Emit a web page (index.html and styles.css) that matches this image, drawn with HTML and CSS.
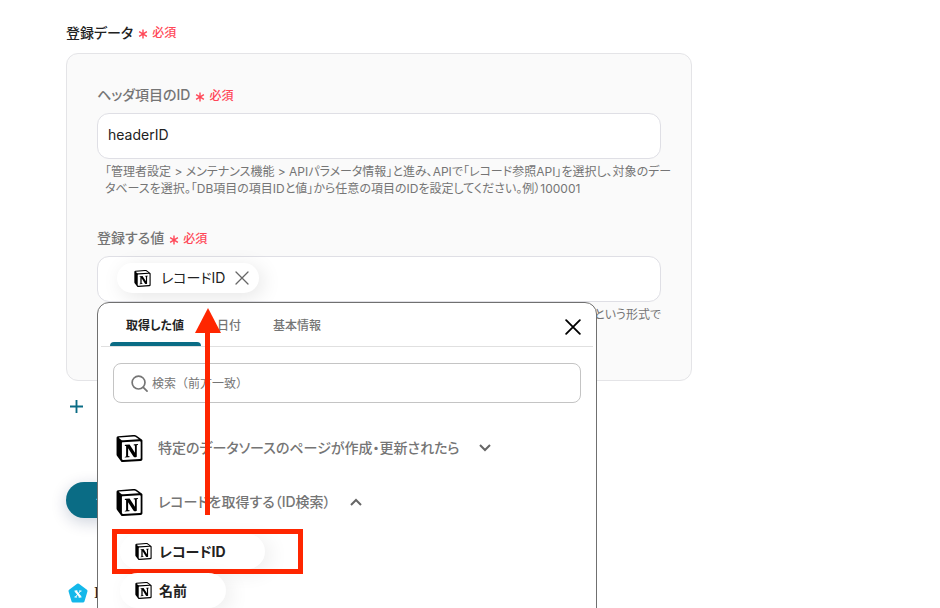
FILE: index.html
```html
<!DOCTYPE html>
<html lang="ja">
<head>
    <meta charset="UTF-8">
    <meta name="viewport" content="width=device-width, initial-scale=1.0">
    <title>登録データ</title>
    <link rel="stylesheet" href="styles.css">
</head>
<body>
    <!-- Shared icons -->
    <svg class="sprite" aria-hidden="true">
        <symbol id="notion" viewBox="0 0 24 24">
            <path fill="#fff" d="M2 1L17 0l6 5v17L5 23.500 1 18z"/>
            <path d="M4.459 4.208c.746.606 1.026.56 2.428.466l13.215-.793c.28 0 .047-.28-.046-.326L17.86 1.968c-.42-.326-.981-.7-2.055-.607L3.01 2.295c-.466.046-.56.28-.374.466zm.793 3.08v13.904c0 .747.373 1.027 1.214.98l14.523-.84c.841-.046.935-.56.935-1.167V6.354c0-.606-.233-.933-.748-.887l-15.177.887c-.56.047-.747.327-.747.933zm14.337.745c.093.42 0 .84-.42.888l-.7.14v10.264c-.608.327-1.168.514-1.635.514-.748 0-.935-.234-1.495-.933l-4.577-7.186v6.952L12.21 19s0 .84-1.168.84l-3.222.186c-.093-.186 0-.653.327-.746l.84-.233V9.854L7.822 9.76c-.094-.42.14-1.026.793-1.073l3.456-.233 4.764 7.279v-6.44l-1.215-.139c-.093-.514.28-.887.747-.933zM1.936 1.035l13.31-.98c1.634-.14 2.055-.047 3.082.7l4.249 2.986c.7.513.934.653.934 1.213v16.378c0 1.026-.373 1.634-1.68 1.726l-15.458.934c-.98.047-1.448-.093-1.962-.747l-3.129-4.06c-.56-.747-.793-1.306-.793-1.96V2.667c0-.839.374-1.54 1.447-1.632z"/>
        </symbol>
        <symbol id="asterisk" viewBox="0 0 10 10">
            <path d="M5 .5v9M1.100 2.700l7.800 4.600M8.900 2.700L1.100 7.300" stroke="#ff4757" stroke-width="1.400"/>
        </symbol>
        <symbol id="close" viewBox="0 0 14 14">
            <path d="M1 1l12 12M13 1L1 13" fill="none" stroke="currentColor" stroke-linecap="round"/>
        </symbol>
    </svg>

    <main class="page">
        <h1 class="title">登録データ <span class="required"><svg><use href="#asterisk"/></svg>必須</span></h1>

        <section class="card">
            <div class="field">
                <label class="label" for="headerId">ヘッダ項目のID <span class="required"><svg><use href="#asterisk"/></svg>必須</span></label>
                <input class="box" type="text" id="headerId" value="headerID">
                <p class="help">「管理者設定 &gt; メンテナンス機能 &gt; APIパラメータ情報」と進み、APIで「レコード参照API」を選択し、対象のデータベースを選択。「DB項目の項目IDと値」から任意の項目のIDを設定してください。例）100001</p>
            </div>

            <div class="field">
                <h2 class="label">登録する値 <span class="required"><svg><use href="#asterisk"/></svg>必須</span></h2>
                <div class="box token-box">
                    <span class="token">
                        <svg class="logo-small"><use href="#notion"/></svg>
                        レコードID
                        <button class="token-remove" type="button" aria-label="削除"><svg stroke-width="1.300"><use href="#close"/></svg></button>
                    </span>
                </div>
                <p class="help help-end">という形式で</p>

                <!-- Value picker -->
                <div class="picker">
                    <div class="tabs">
                        <button class="tab active" type="button">取得した値</button>
                        <button class="tab" type="button">日付</button>
                        <button class="tab" type="button">基本情報</button>
                        <button class="picker-close" type="button" aria-label="閉じる"><svg stroke-width="1.600"><use href="#close"/></svg></button>
                    </div>

                    <div class="picker-body">
                        <div class="search">
                            <svg viewBox="0 0 18 18" fill="none" stroke="#757575" stroke-width="1.800" stroke-linecap="round"><circle cx="8" cy="8" r="6.800"/><path d="M13 13l4 4"/></svg>
                            <input type="search" placeholder="検索（前方一致）" aria-label="検索">
                        </div>

                        <button class="source" type="button">
                            <svg class="logo"><use href="#notion"/></svg>
                            特定のデータソースのページが作成・更新されたら
                            <svg class="chevron" viewBox="0 0 12 8"><path d="M1 1l5 5 5-5"/></svg>
                        </button>
                        <button class="source" type="button">
                            <svg class="logo"><use href="#notion"/></svg>
                            レコードを取得する（ID検索）
                            <svg class="chevron" viewBox="0 0 12 8"><path d="M1 7l5-5 5 5"/></svg>
                        </button>

                        <div class="values">
                            <div class="value-row">
                                <button class="value" type="button"><svg class="logo-small"><use href="#notion"/></svg>レコードID</button>
                                <span class="highlight"></span>
                            </div>
                            <div class="value-row">
                                <button class="value" type="button"><svg class="logo-small"><use href="#notion"/></svg>名前</button>
                            </div>
                        </div>
                    </div>

                    <svg class="arrow" viewBox="0 0 26 207" fill="#ff2600"><path d="M13 0l13 25H0z"/><path d="M10 24h5v183h-5z"/></svg>
                </div>
            </div>
        </section>

        <button class="add" type="button">
            <svg viewBox="0 0 14 14" stroke="#0a6c85" stroke-width="2"><path d="M7 0v14M0 7h14"/></svg>
            追加
        </button>
        <button class="test" type="button">テスト</button>

        <div class="next">
            <svg viewBox="0 0 20 20">
                <path d="M10 2l8 6-3 10H5L2 8z" fill="#14b8ea" stroke="#14b8ea" stroke-width="3" stroke-linejoin="round"/>
                <path d="M7.500 8l5 6" stroke="#fff" stroke-width="2"/>
                <path d="M12.500 8l-5 6M6.500 8h3M11 8h2.500M6.500 14h2.500M10.500 14h3" stroke="#fff"/>
            </svg>
            I
        </div>
    </main>
</body>
</html>
```
FILE: styles.css
```css
* {
    box-sizing: border-box;
}
body {
    margin: 0;
    font-family: Inter, "Noto Sans CJK JP", sans-serif;
    font-feature-settings: "palt";
    font-size: 14px;
    line-height: 20px;
    color: #222;
    background: #fff;
}
button, input {
    font: inherit;
    font-feature-settings: inherit;
    color: inherit;
}
button {
    border: none;
    padding: 0;
    background: none;
    cursor: pointer;
}
.sprite {
    display: none;
}
.page {
    height: 100vh;
    overflow: hidden;
    padding: 22px 248px 0 66px;
}
.title, .label {
    display: flex;
    align-items: center;
    gap: 5px;
    margin: 0;
    font-size: 14px;
    font-weight: 500;
}
.label {
    margin-bottom: 8px;
    color: #757575;
}
.required {
    display: flex;
    align-items: center;
    gap: 4px;
    padding-top: 1px;
    font-size: 12px;
    color: #ff4757;
}
.required svg {
    width: 10px;
    height: 10px;
    margin-top: 2px;
}
.card {
    margin-top: 10px;
    padding: 31px 30px 0;
    height: 328px;
    border: 1px solid #e4e4e7;
    border-radius: 12px;
    background: #fafafa;
}
.field {
    position: relative;
    margin-bottom: 31px;
}
.label {
    height: 20px;
}
.title {
    height: 21px;
}
.box {
    display: block;
    width: 100%;
    height: 46px;
    padding: 0 10px 4px;
    border: 1px solid #dfdfe5;
    border-radius: 12px;
    background: #fff;
}
.token-box {
    display: flex;
    align-items: center;
    padding: 0 19px 2px;
}
.token {
    display: flex;
    align-items: center;
    gap: 10px;
    height: 30px;
    padding: 0 10px 0 17px;
    border-radius: 15px;
    background: #fff;
    box-shadow: 4px 4px 20px rgba(0, 0, 0, 0.1);
}
.token-remove {
    display: flex;
    color: #666;
}
.token-remove svg {
    width: 14px;
    height: 14px;
}
.help {
    margin: 4px -14px 0 0;
    padding-left: 8px;
    font-size: 12px;
    line-height: 17px;
    color: #757575;
}
.help-end {
    margin-right: 0;
    text-align: right;
}
.logo {
    width: 27px;
    height: 27px;
}
.logo-small {
    width: 17px;
    height: 17px;
}
.picker {
    position: absolute;
    top: 74px;
    left: 0;
    width: 500px;
    height: 480px;
    border: 1px solid #707070;
    border-radius: 12px;
    background: #fff;
}
.tabs {
    display: flex;
    height: 44px;
    margin: 0 3px;
    padding: 0 9px;
    border-bottom: 1px solid #e0e0e0;
}
.tab {
    padding: 6px 16px 0;
    border-bottom: 4px solid transparent;
    font-size: 12px;
    font-weight: 500;
    color: #757575;
}
.tab.active {
    position: relative;
    padding: 6px 17px 0 16px;
    font-weight: 700;
    color: #222;
}
.tab.active::after {
    content: "";
    position: absolute;
    left: 0;
    right: 0;
    bottom: -4px;
    height: 4px;
    border-radius: 4px 4px 0 0;
    background: #0a6c85;
}
.picker-close {
    display: flex;
    align-items: center;
    margin-left: auto;
    padding: 5px 3px 0;
    color: #000;
}
.picker-close svg {
    width: 16px;
    height: 16px;
}
.picker-body {
    padding: 16px 15px;
}
.search {
    display: flex;
    align-items: center;
    gap: 4px;
    height: 40px;
    margin-bottom: 18px;
    padding: 0 17px;
    border: 1px solid #c4c4c4;
    border-radius: 8px;
}
.search svg {
    width: 17px;
    height: 17px;
}
.search input {
    flex: 1;
    border: none;
    outline: none;
    padding: 2px 0 0;
    font-feature-settings: normal;
    font-size: 12px;
}
.search input::placeholder {
    color: #757575;
}
.source {
    display: flex;
    align-items: center;
    gap: 15px;
    width: 100%;
    height: 54px;
    padding-left: 3px;
    font-weight: 500;
    color: #757575;
}
.chevron {
    width: 12px;
    height: 8px;
    margin-left: 4px;
    fill: none;
    stroke: #666;
    stroke-width: 2px;
}
.values {
    display: grid;
    gap: 4px;
    padding: 5px 7px;
}
.value-row {
    position: relative;
}
.value {
    display: flex;
    align-items: center;
    gap: 7px;
    height: 35px;
    padding: 0 39px 0 15px;
    border-radius: 18px;
    background: #fff;
    box-shadow: 6px 4px 20px rgba(0, 0, 0, 0.07);
    font-weight: 700;
}
/* Marks the value to pick */
.highlight {
    position: absolute;
    top: -5px;
    left: -8px;
    width: 191px;
    height: 45px;
    border: 5px solid #ff2600;
}
.arrow {
    position: absolute;
    top: 5px;
    left: 97px;
    width: 26px;
    height: 207px;
}
.add {
    display: flex;
    align-items: center;
    gap: 14px;
    margin: 15px 0 0 4px;
    color: #0a6c85;
}
.add svg {
    width: 13px;
    height: 13px;
}
.test {
    display: block;
    width: 96px;
    height: 36px;
    margin: 66px 0 65px;
    border-radius: 18px;
    background: #0a6c85;
    box-shadow: 0 4px 16px rgba(0, 30, 80, 0.2);
    color: #fff;
}
.next {
    display: flex;
    align-items: center;
    gap: 6px;
    padding-left: 2px;
    font-family: "Liberation Serif", serif;
    font-size: 16px;
    font-weight: 700;
}
.next svg {
    width: 20px;
    height: 20px;
}
```
